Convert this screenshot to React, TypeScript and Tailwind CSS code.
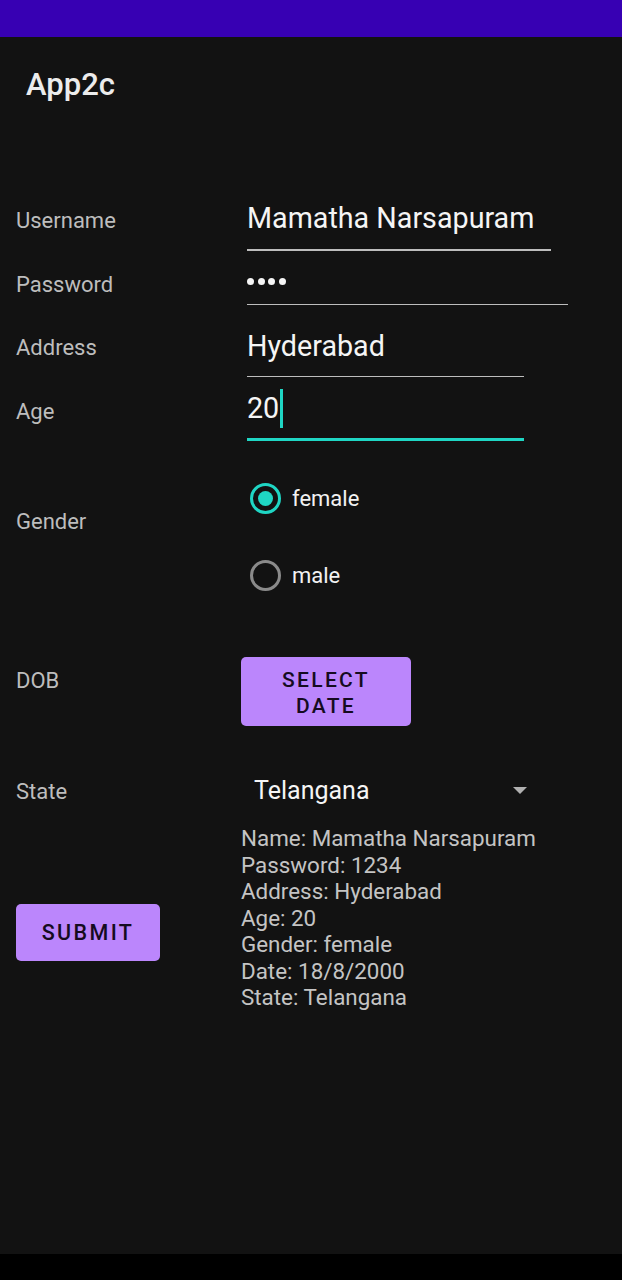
import React from "react";

const font = { fontFamily: "Roboto, 'Noto Sans', sans-serif" };

function Label({ text, pt }: { text: string; pt: string }) {
  return (
    <div className={`w-[241px] shrink-0 pl-[16px] ${pt}`}>
      <div className="text-[22px] leading-[28px] text-[#bdbdbd]">{text}</div>
    </div>
  );
}

function Radio({ checked, label }: { checked: boolean; label: string }) {
  return (
    <div className="flex items-center h-[31px]">
      <div
        className={`w-[31px] h-[31px] rounded-full border-[3px] flex items-center justify-center ${
          checked ? "border-[#1fd6c4]" : "border-[#8a8a8a]"
        }`}
      >
        {checked && <div className="w-[15px] h-[15px] rounded-full bg-[#1fd6c4]" />}
      </div>
      <span className="ml-[11px] text-[22px] leading-[28px] text-[#f2f2f2]">{label}</span>
    </div>
  );
}

export default function App() {
  const summary = [
    "Name: Mamatha Narsapuram",
    "Password: 1234",
    "Address: Hyderabad",
    "Age: 20",
    "Gender: female",
    "Date: 18/8/2000",
    "State: Telangana",
  ];

  return (
    <div className="w-[622px] h-[1280px] flex flex-col bg-black" style={font}>
      {/* status bar */}
      <div className="h-[37px] bg-[#3700b3]" />

      <div className="h-[1217px] bg-[#121212] flex flex-col">
        {/* toolbar title */}
        <div className="pl-[26px] pt-[30px] h-[153px]">
          <div className="text-[31px] leading-[36px] font-medium text-[#ececec]">App2c</div>
        </div>

        {/* Username */}
        <div className="flex h-[62px]">
          <Label text="Username" pt="pt-[17px]" />
          <div className="ml-[6px] pt-[12px]">
            <div className="text-[28.7px] leading-[32px] text-[#f5f5f5]">Mamatha Narsapuram</div>
            <div className="mt-[15px] h-[1.5px] w-[304px] bg-[#bdbdbd]" />
          </div>
        </div>

        {/* Password */}
        <div className="flex h-[54px]">
          <Label text="Password" pt="pt-[19px]" />
          <div className="ml-[6px] pt-[13px]">
            <div className="h-[32px] flex items-center gap-[3.5px]">
              <div className="w-[7px] h-[7px] rounded-full bg-[#f5f5f5]" />
              <div className="w-[7px] h-[7px] rounded-full bg-[#f5f5f5]" />
              <div className="w-[7px] h-[7px] rounded-full bg-[#f5f5f5]" />
              <div className="w-[7px] h-[7px] rounded-full bg-[#f5f5f5]" />
            </div>
            <div className="mt-[6.5px] h-[1.5px] w-[321px] bg-[#bdbdbd]" />
          </div>
        </div>

        {/* Address */}
        <div className="flex h-[72px]">
          <Label text="Address" pt="pt-[28px]" />
          <div className="ml-[6px] pt-[24px]">
            <div className="text-[28.7px] leading-[32px] text-[#f5f5f5]">Hyderabad</div>
            <div className="mt-[13.5px] h-[1.5px] w-[277px] bg-[#bdbdbd]" />
          </div>
        </div>

        {/* Age */}
        <div className="flex h-[64px]">
          <Label text="Age" pt="pt-[20px]" />
          <div className="ml-[6px] pt-[14px]">
            <div className="h-[32px] flex items-center">
              <span className="text-[28.7px] leading-[32px] text-[#f5f5f5]">20</span>
              <div className="ml-[1px] w-[2.5px] h-[39px] bg-[#1fd6c4]" />
            </div>
            <div className="mt-[14px] h-[2.5px] w-[277px] bg-[#1fd6c4]" />
          </div>
        </div>

        {/* Gender */}
        <div className="flex h-[178px]">
          <Label text="Gender" pt="pt-[66px]" />
          <div className="ml-[9px] pt-[41px] flex flex-col gap-[46px]">
            <Radio checked label="female" />
            <Radio checked={false} label="male" />
          </div>
        </div>

        {/* DOB */}
        <div className="flex h-[120px]">
          <Label text="DOB" pt="pt-[47px]" />
          <div className="pt-[37px]">
            <div className="w-[170px] h-[69px] pt-[3px] rounded-[5px] bg-[#bb86fc] flex flex-col items-center justify-center text-[21px] leading-[26.5px] font-medium tracking-[0.11em] text-[#150b20]">
              <span>SELECT</span>
              <span>DATE</span>
            </div>
          </div>
        </div>

        {/* State */}
        <div className="flex h-[80px]">
          <Label text="State" pt="pt-[38px]" />
          <div className="pt-[35px] w-[300px] flex items-start">
            <div className="pl-[13px] text-[25px] leading-[32px] text-[#f5f5f5] flex-1">Telangana</div>
            <svg width="14" height="8" viewBox="0 0 14 8" className="mt-[12px] mr-[14px]">
              <polygon points="0,0 14,0 7,7" fill="#b0b0b0" />
            </svg>
          </div>
        </div>

        {/* Submit + result */}
        <div className="flex">
          <div className="w-[241px] shrink-0 pl-[16px] pt-[84px]">
            <div className="w-[144px] h-[57px] pt-[1px] rounded-[5px] bg-[#bb86fc] flex items-center justify-center text-[21.5px] font-medium tracking-[0.11em] text-[#150b20]">
              SUBMIT
            </div>
          </div>
          <div className="pt-[5px] flex flex-col">
            {summary.map((line) => (
              <div key={line} className="text-[22.4px] leading-[26.5px] text-[#c4c4c4]">
                {line}
              </div>
            ))}
          </div>
        </div>
      </div>

      <div className="h-[26px] bg-black" />
    </div>
  );
}
